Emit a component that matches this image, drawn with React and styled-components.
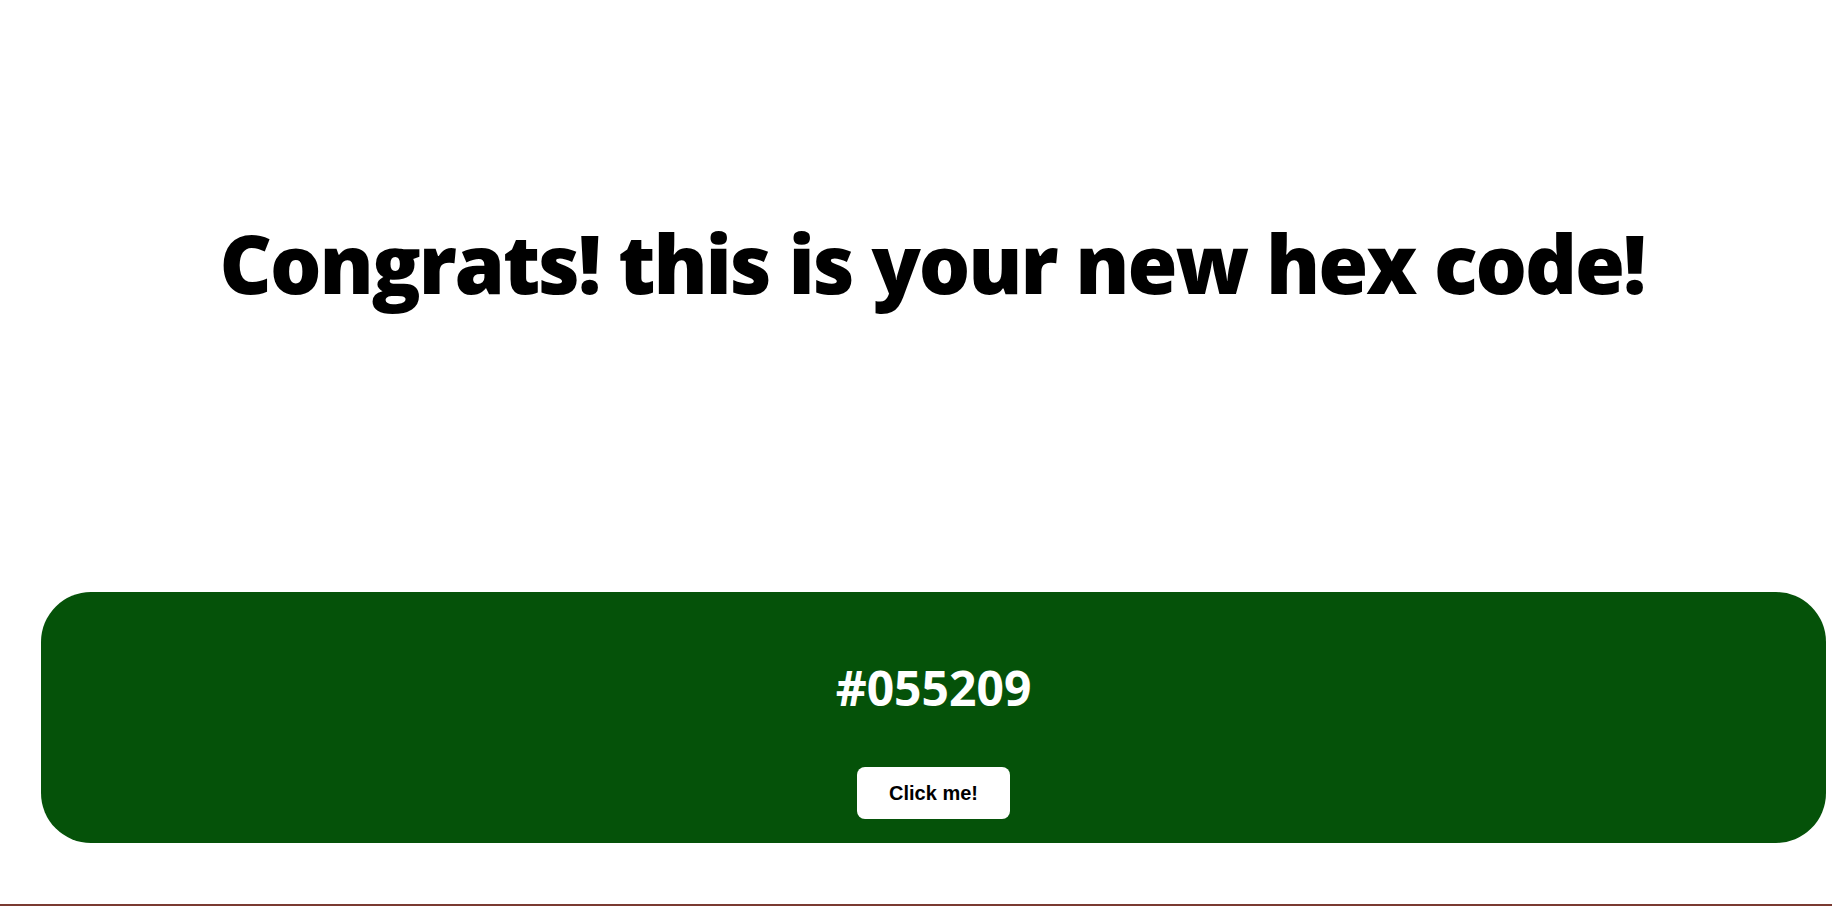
import React from "react";
import styled, { createGlobalStyle } from "styled-components";

const GlobalStyle = createGlobalStyle`
  html, body {
    margin: 0;
    padding: 0;
    background: #ffffff;
  }
  * { box-sizing: border-box; }
`;

const Page = styled.div`
  height: 906px;
  display: flex;
  flex-direction: column;
  overflow: hidden;
`;

const Title = styled.h1`
  margin: 222px 0 0 0;
  padding-left: 32px;
  text-align: center;
  font-family: "Open Sans", "Noto Sans", sans-serif;
  font-weight: 800;
  font-size: 81px;
  line-height: 1;
  color: #000;
  letter-spacing: -2.1px;
`;

const ColorCard = styled.section`
  margin: 289px 6px 0 41px;
  height: 251px;
  border-radius: 50px;
  background: ${(p) => p.$color};
  display: flex;
  flex-direction: column;
  align-items: center;
  padding-top: 72px;
  gap: 55px;
`;

const HexCode = styled.h2`
  margin: 0;
  font-family: "Open Sans", "Noto Sans", sans-serif;
  font-weight: 700;
  font-size: 48px;
  line-height: 1;
  color: #ffffff;
`;

const ActionButton = styled.button`
  width: 153px;
  height: 52px;
  border: none;
  border-radius: 8px;
  background: #ffffff;
  color: #000;
  font-family: "Liberation Sans", Arial, sans-serif;
  font-weight: 700;
  font-size: 20px;
  cursor: pointer;
`;

const BottomRule = styled.div`
  margin-top: auto;
  height: 2px;
  background: #7a3a31;
`;

export default function App() {
  const hex = "#055209";
  return (
    <>
      <GlobalStyle />
      <Page>
        <Title>Congrats! this is your new hex code!</Title>
        <ColorCard $color={hex}>
          <HexCode>{hex}</HexCode>
          <ActionButton>Click me!</ActionButton>
        </ColorCard>
        <BottomRule />
      </Page>
    </>
  );
}
